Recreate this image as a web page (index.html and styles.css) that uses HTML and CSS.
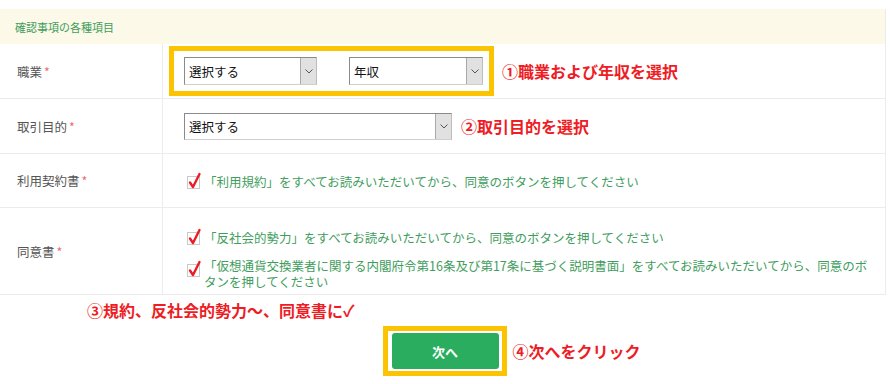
FILE: index.html
```html
<!DOCTYPE html>
<html lang="ja">
<head>
<meta charset="utf-8">
<title>確認事項</title>
<link rel="stylesheet" href="styles.css">
</head>
<body>
<div class="page">
  <div class="form">
    <div class="head">確認事項の各種項目</div>

    <div class="row r1">
      <div class="lab">職業<span class="req">*</span></div>
      <div class="val">
        <div class="sel-group">
          <div class="sel w1"><span class="sel-text">選択する</span><span class="arrow"><svg width="8" height="5" viewBox="0 0 8 5"><polyline points="0.5,0.5 4,4 7.5,0.5" fill="none" stroke="#555" stroke-width="1"/></svg></span></div>
          <div class="sel w2"><span class="sel-text">年収</span><span class="arrow"><svg width="8" height="5" viewBox="0 0 8 5"><polyline points="0.5,0.5 4,4 7.5,0.5" fill="none" stroke="#555" stroke-width="1"/></svg></span></div>
          <span class="frame"></span>
        </div>
        <span class="note n1">①職業および年収を選択</span>
      </div>
    </div>

    <div class="row r2">
      <div class="lab">取引目的<span class="req">*</span></div>
      <div class="val">
        <div class="sel w3"><span class="sel-text">選択する</span><span class="arrow"><svg width="8" height="5" viewBox="0 0 8 5"><polyline points="0.5,0.5 4,4 7.5,0.5" fill="none" stroke="#555" stroke-width="1"/></svg></span></div>
        <span class="note n2">②取引目的を選択</span>
      </div>
    </div>

    <div class="row r3">
      <div class="lab">利用契約書<span class="req">*</span></div>
      <div class="val">
        <div class="item">
          <span class="cb"><svg class="tick" width="14" height="17" viewBox="0 0 14 17"><polyline points="2,10.5 5,15 11.5,2" fill="none" stroke="#ec1c24" stroke-width="2.4" stroke-linecap="round" stroke-linejoin="round"/></svg></span>
          <span class="txt">「利用規約」をすべてお読みいただいてから、同意のボタンを押してください</span>
        </div>
      </div>
    </div>

    <div class="row r4">
      <div class="lab">同意書<span class="req">*</span></div>
      <div class="val col">
        <div class="item">
          <span class="cb"><svg class="tick" width="14" height="17" viewBox="0 0 14 17"><polyline points="2,10.5 5,15 11.5,2" fill="none" stroke="#ec1c24" stroke-width="2.4" stroke-linecap="round" stroke-linejoin="round"/></svg></span>
          <span class="txt">「反社会的勢力」をすべてお読みいただいてから、同意のボタンを押してください</span>
        </div>
        <div class="item">
          <span class="cb cb2"><svg class="tick" width="14" height="17" viewBox="0 0 14 17"><polyline points="2,10.5 5,15 11.5,2" fill="none" stroke="#ec1c24" stroke-width="2.4" stroke-linecap="round" stroke-linejoin="round"/></svg></span>
          <span class="txt long">「仮想通貨交換業者に関する内閣府令第16条及び第17条に基づく説明書面」をすべてお読みいただいてから、同意のボタンを押してください</span>
        </div>
      </div>
    </div>
  </div>

  <div class="note n3">③規約、反社会的勢力〜、同意書に✓</div>

  <div class="actions">
    <div class="btn-wrap">
      <button class="btn" type="button">次へ</button>
      <span class="frame bframe"></span>
      <span class="note n4">④次へをクリック</span>
    </div>
  </div>
</div>
</body>
</html>
```

FILE: styles.css
```css
* { box-sizing: border-box; }

html, body {
  margin: 0;
  padding: 0;
  background: #fff;
}

body {
  font-family: "Noto Sans CJK JP", "Noto Sans", sans-serif;
  width: 890px;
  height: 384px;
  overflow: hidden;
}

.page {
  padding-top: 9px;
}

.form {
  width: 886px;
  border-right: 1px solid #ececec;
}

.head {
  height: 35px;
  background: #fdf9e9;
  color: #3f9d5e;
  font-size: 11px;
  padding-left: 15px;
  display: flex;
  align-items: center;
}

.row {
  display: grid;
  grid-template-columns: 163px 1fr;
  border-bottom: 1px solid #ececec;
}

.r1 { height: 55px; }
.r2 { height: 55px; }
.r3 { height: 54px; }
.r4 { height: 87px; }

.lab {
  border-right: 1px solid #ececec;
  padding-left: 17px;
  display: flex;
  align-items: center;
  font-size: 12.5px;
  color: #555;
}

.req {
  color: #ec6a72;
  margin-left: 2px;
}

.val {
  padding-left: 21px;
  display: flex;
  align-items: center;
}

.val.col {
  flex-direction: column;
  align-items: flex-start;
  justify-content: flex-start;
  padding-top: 22px;
  gap: 12px;
}

.sel-group {
  position: relative;
  display: flex;
  gap: 32px;
}

.sel {
  height: 28px;
  border: 1px solid #8a8a8a;
  border-bottom-color: #cfcfcf;
  border-right-color: #bdbdbd;
  background: #fff;
  display: flex;
  align-items: center;
  justify-content: space-between;
  font-size: 12.5px;
  color: #111;
}

.w1 { width: 133px; }
.w2 { width: 134px; }
.w3 { width: 268px; height: 27px; }

.sel-text {
  padding-left: 4px;
}

.arrow {
  width: 16px;
  height: 100%;
  background: #e1e1e1;
  border-left: 1px solid #a9a9a9;
  display: flex;
  align-items: center;
  justify-content: center;
}

.frame {
  position: absolute;
  top: -11px;
  left: -15px;
  right: -11px;
  bottom: -11px;
  border: 5px solid #fcc400;
  pointer-events: none;
}

.note {
  color: #ee1c25;
  font-weight: 700;
  font-size: 16px;
  white-space: nowrap;
}

.n1 { margin-left: 19px; }
.n2 { margin-left: 9px; }

.item {
  display: flex;
  align-items: flex-start;
  padding-left: 3px;
  font-size: 12.5px;
  line-height: 16px;
  color: #3f9d5e;
}

.r3 .item { margin-top: 2px; }

.cb {
  position: relative;
  flex: none;
  width: 13px;
  height: 13px;
  border: 1px solid #c9c9c9;
  background: #fff;
  margin-top: 2px;
  margin-right: 4px;
}

.cb2 { margin-top: 6px; }

.tick {
  position: absolute;
  left: 0;
  top: -5px;
}

.txt.long {
  width: 672px;
}

.n3 {
  padding-left: 87px;
  margin-top: 5px;
  line-height: 20px;
}

.actions {
  display: flex;
  justify-content: center;
  margin-top: 13px;
}

.btn-wrap {
  position: relative;
}

.btn {
  display: block;
  width: 107px;
  height: 36px;
  border: none;
  border-radius: 3px;
  background: #2aad5e;
  color: #fff;
  font-family: "Noto Sans CJK JP", "Noto Sans", sans-serif;
  font-weight: 700;
  font-size: 13px;
  padding: 0;
}

.bframe {
  top: -7px;
  left: -9px;
  right: -8px;
  bottom: -7px;
}

.n4 {
  position: absolute;
  left: calc(100% + 14px);
  top: 50%;
  transform: translateY(-50%);
  line-height: 20px;
}
```
